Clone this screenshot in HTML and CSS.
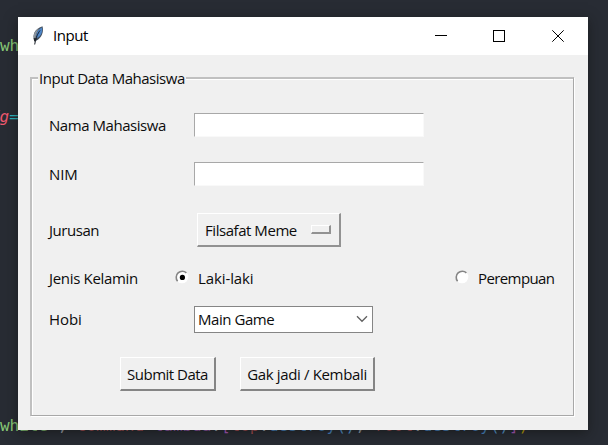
FILE: index.html
```html
<!DOCTYPE html>
<html lang="id">
<head>
<meta charset="utf-8">
<title>Input</title>
<link rel="stylesheet" href="styles.css">
</head>
<body>
<div class="editor">
  <div class="code code-first"><span class="str">wh</span></div>
  <div class="code code-second"><span class="arg">fg</span><span class="op">=</span></div>
  <div class="code code-last"><span class="str">white"</span><span class="punct">, </span><span class="kw">command</span><span class="op">=</span><span class="lam">lambda</span><span class="punct">:</span><span class="brk">[</span><span class="kw">top</span><span class="punct">.</span><span class="fn">destroy</span><span class="par">()</span><span class="punct">, </span><span class="kw">root</span><span class="punct">.</span><span class="fn">destroy</span><span class="par">()</span><span class="brk">]</span><span class="end">)</span></div>
</div>
<main class="window">
  <header class="titlebar">
    <svg class="feather" width="14" height="22" viewBox="0 0 14 22">
      <path d="M3.6 16 C.8 11 3 4 11.5 1.2 C13 6 11 13 5.2 15.8Z" fill="#45515f"/>
      <path d="M5.3 13 C4.6 8 7 4.2 11 2.4 C12 7 9.5 12 5.3 13Z" fill="#4d86c9"/>
      <path d="M3 12.5 C2.3 8.5 4.7 5 8 3.6 C5.5 7 4.7 10 4.6 13.5Z" fill="#8d969e"/>
      <path d="M9 5.5 C6.8 8.5 5 12 3.7 19.5" fill="none" stroke="#151b24" stroke-width="1"/>
      <path d="M2.5 13.2 L5.8 13.4 L4.5 16.5 L3.3 16.5Z" fill="#20252b"/>
    </svg>
    <h1 class="title">Input</h1>
    <svg class="controls" width="130" height="13" viewBox="0 0 130 13" fill="none" stroke="#000">
      <path d="M0 5.5H12" />
      <rect x="58.5" y="0.5" width="11" height="11" shape-rendering="crispEdges"/>
      <path d="M117.3 .3L128.7 11.7M128.7 .3L117.3 11.7"/>
    </svg>
  </header>
  <form class="panel">
    <h2 class="legend">Input Data Mahasiswa</h2>
    <div class="row row-name"><label class="label">Nama Mahasiswa</label><span class="entry"></span></div>
    <div class="row row-nim"><label class="label natural">NIM</label><span class="entry"></span></div>
    <div class="row row-major"><label class="label">Jurusan</label><span class="option"><span class="text">Filsafat Meme</span><i class="indicator"></i></span></div>
    <div class="row row-gender">
      <label class="label label-gender">Jenis Kelamin</label>
      <svg class="radio" width="16" height="16" viewBox="0 0 16 16"><circle cx="8" cy="8" r="6.3" fill="#fff"/><path d="M3.6 12.2A6.1 6.1 0 0 1 12.4 3.8" fill="none" stroke="#858585" stroke-width="1.6"/><circle cx="8.4" cy="8.4" r="2.6" fill="#000"/></svg>
      <span class="choice natural">Laki-laki</span>
      <svg class="radio" width="16" height="16" viewBox="0 0 16 16"><circle cx="8" cy="8" r="6.3" fill="#fff"/><path d="M3.6 12.2A6.1 6.1 0 0 1 12.4 3.8" fill="none" stroke="#858585" stroke-width="1.6"/></svg>
      <span class="choice-last">Perempuan</span>
    </div>
    <div class="row row-hobby"><label class="label natural">Hobi</label><span class="combo"><span class="text">Main Game</span><svg width="12" height="8" viewBox="0 0 12 8"><path d="M1 1.3L6 6.3L11 1.3" fill="none" stroke="#606060" stroke-width="1.3"/></svg></span></div>
    <div class="row row-actions"><button type="button" class="button submit">Submit Data</button><button type="button" class="button cancel">Gak jadi / Kembali</button></div>
  </form>
</main>
</body>
</html>
```
FILE: styles.css
```css
* { box-sizing: border-box; }
body {
  margin: 0;
  width: 608px;
  height: 445px;
  overflow: hidden;
  position: relative;
  background: #282c34;
  color: #0c0c0c;
  font: 15px/20px "Open Sans", "Noto Sans", sans-serif;
  letter-spacing: -0.45px;
}
.editor {
  height: 445px;
  overflow: hidden;
  font: 16px/20px "DejaVu Sans Mono", monospace;
  letter-spacing: -0.03px;
}
.code { height: 20px; white-space: pre; }
.code-first { margin-top: 36px; }
.code-second { margin-top: 51px; margin-left: -10px; }
.code-last { margin-top: 289px; }
.str { color: #89ca78; }
.arg { color: #ef596f; font-style: italic; }
.op { color: #2bbac5; }
.kw { color: #b9525b; }
.lam { color: #9d5bb8; }
.brk { color: #c061d6; }
.fn { color: #4c91d9; }
.par { color: #61afef; }
.punct { color: #abb2bf; }
.end { color: #d8b800; }
.window {
  position: absolute;
  left: 18px;
  top: 17px;
  width: 570px;
  height: 413px;
  background: #f0f0f0;
  box-shadow: 0 3px 12px rgba(20, 22, 20, 0.65);
}
.titlebar {
  display: flex;
  align-items: center;
  height: 38px;
  padding: 0 23px 0 13px;
  background: #fff;
}
.title {
  margin: -2px auto 0 8px;
  color: #000;
  font-size: 15px;
  font-weight: 400;
}
.panel {
  width: 544px;
  height: 339px;
  margin: 22px 0 0 12px;
  border: 1px solid #a8a8a8;
  border-left: 2px solid #c0c0c0;
  border-top: 2px solid #c0c0c0;
  box-shadow: 1px 1px 0 #fff, inset 1px 1px 0 #fff;
}
.legend {
  width: 148px;
  height: 20px;
  margin: -11px 0 13px 6px;
  padding-left: 1px;
  background: #f0f0f0;
  font-size: 15px;
  font-weight: 400;
  letter-spacing: -0.47px;
  white-space: nowrap;
}
.row {
  display: flex;
  align-items: center;
  padding-left: 17px;
  white-space: nowrap;
}
.row-name { height: 48px; }
.row-nim { height: 50px; }
.row-major { height: 62px; }
.row-gender { height: 34px; }
.row-hobby { height: 48px; }
.row-actions { height: 62px; padding-left: 88px; }
.label { width: 145px; }
.label-gender { width: 125px; letter-spacing: -0.32px; }
.natural { letter-spacing: -0.1px; }
.entry {
  width: 230px;
  height: 24px;
  background: #fff;
  border: 1px solid;
  border-color: #a8a8a8 #f9f9f9 #f9f9f9 #a8a8a8;
}
.option {
  display: flex;
  align-items: center;
  justify-content: space-between;
  width: 144px;
  height: 34px;
  margin-left: 3px;
  padding: 0 8px 0 7px;
  border: solid;
  border-width: 1px 2px 2px 1px;
  border-color: #fff #929292 #929292 #fff;
}
.indicator {
  width: 20px;
  height: 9px;
  border: solid;
  border-width: 1px 2px 2px 1px;
  border-color: #fff #929292 #929292 #fff;
}
.radio { margin-top: -2px; flex: none; }
.choice { width: 256px; margin-left: 8px; }
.choice-last { margin-left: 8px; letter-spacing: -0.6px; }
.combo {
  display: flex;
  align-items: center;
  justify-content: space-between;
  width: 179px;
  height: 27px;
  padding: 0 4px 0 3px;
  border: 1px solid #858585;
  background: #fff;
}
.button {
  height: 34px;
  padding: 0;
  border: solid;
  border-width: 1px 2px 2px 1px;
  border-color: #fff #858585 #858585 #fff;
  background: #f0f0f0;
  color: inherit;
  font: inherit;
  letter-spacing: -0.35px;
  white-space: nowrap;
}
.submit { width: 96px; letter-spacing: -0.5px; }
.cancel { width: 135px; margin-left: 24px; }
```
